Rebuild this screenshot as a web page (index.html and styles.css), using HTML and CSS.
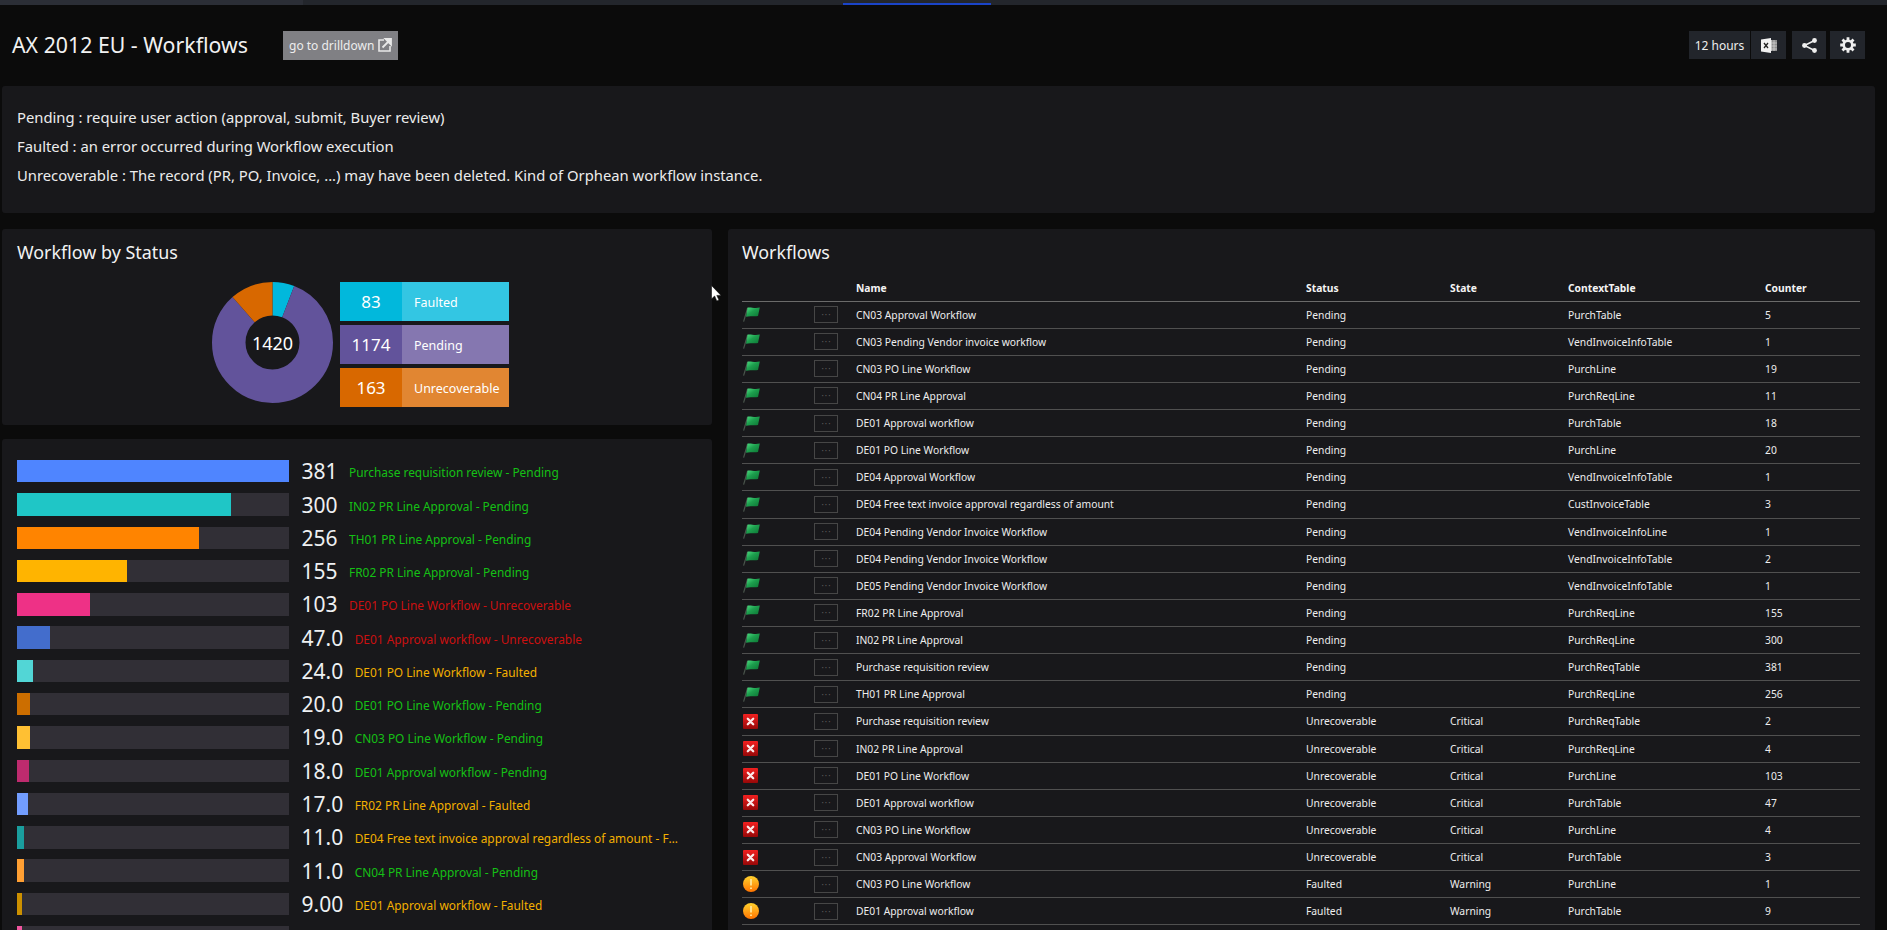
FILE: index.html
```html
<!DOCTYPE html>
<html lang="en">
<head>
  <meta charset="UTF-8" />
  <title>AX 2012 EU - Workflows</title>
  <link rel="stylesheet" href="styles.css">
</head>
<body>
  <svg class="defs" width="0" height="0">
    <defs>
      <linearGradient id="flagGrad" x1="0" y1="0" x2="1" y2="1">
        <stop offset="0" stop-color="#4fe083" />
        <stop offset="0.45" stop-color="#1d9f4e" />
        <stop offset="1" stop-color="#0c7433" />
      </linearGradient>
      <linearGradient id="errGrad" x1="0" y1="0" x2="0" y2="1">
        <stop offset="0" stop-color="#f22020" />
        <stop offset="1" stop-color="#960808" />
      </linearGradient>
      <linearGradient id="warnGrad" x1="0" y1="0" x2="0" y2="1">
        <stop offset="0" stop-color="#ffd22e" />
        <stop offset="1" stop-color="#ff7300" />
      </linearGradient>
      <symbol id="flag" viewBox="0 0 17 15">
        <path d="M0.6 14.6 L4.6 1" stroke="#4a554c" stroke-width="1.2" fill="none" />
        <path d="M4.6 0.6 C8 0 11 1.6 16.8 0.6 L15 9 C10.5 9.8 7 8.4 3 9.8 Z" fill="url(#flagGrad)" />
      </symbol>
      <symbol id="err" viewBox="0 0 15 15">
        <rect width="15" height="15" rx="1" fill="url(#errGrad)" />
        <path d="M4.8 4.8 L10.2 10.2 M10.2 4.8 L4.8 10.2" stroke="#fbeaea" stroke-width="2.3" stroke-linecap="round" />
      </symbol>
      <symbol id="warn" viewBox="0 0 16 16">
        <circle cx="8" cy="8" r="8" fill="url(#warnGrad)" />
        <path d="M8 3 V9.5 M8 11.5 V13" stroke="#ffdf8c" stroke-width="2" />
      </symbol>
    </defs>
  </svg>

  <div class="page">
    <div class="topstrip">
      <div class="topstrip-left"></div>
      <div class="topstrip-tab"></div>
    </div>

    <header class="header">
      <h1 class="page-title">AX 2012 EU - Workflows</h1>
      <a class="drill-btn" href="#">go to drilldown
        <svg width="14" height="14" viewBox="0 0 14 14">
          <path d="M6 2 H1 V13 H12 V8" fill="none" stroke="#e8e8e8" stroke-width="1.6" />
          <path d="M4.5 9.5 L10 4 M7.5 1 H13 V6.5 Z" fill="#e8e8e8" stroke="#e8e8e8" stroke-width="1.8" />
        </svg>
      </a>
      <div class="header-tools">
        <span class="tool tool-range">12 hours</span>
        <span class="tool tool-xls">
          <svg width="16" height="15" viewBox="0 0 16 15">
            <rect x="8" y="2" width="8" height="11" fill="#8d8d8d" />
            <path d="M10.5 2 V13 M13 2 V13 M8 5 H16 M8 8 H16 M8 11 H16" stroke="#d8d8d8" stroke-width="0.7" />
            <path d="M0 1.5 L10 0 V15 L0 13.5 Z" fill="#f2f2f2" />
            <path d="M3 5 L7 10 M7 5 L3 10" stroke="#222" stroke-width="1.3" />
          </svg>
        </span>
        <span class="tool tool-share">
          <svg width="15" height="15" viewBox="0 0 15 15">
            <path d="M12.5 2.5 L2.5 7.5 L12.5 12.5" fill="none" stroke="#efefef" stroke-width="1.5" />
            <circle cx="12.5" cy="2.5" r="2.4" fill="#efefef" />
            <circle cx="2.5" cy="7.5" r="2.4" fill="#efefef" />
            <circle cx="12.5" cy="12.5" r="2.4" fill="#efefef" />
          </svg>
        </span>
        <span class="tool tool-gear">
          <svg width="16" height="16" viewBox="0 0 16 16">
            <circle cx="8" cy="8" r="4.3" fill="none" stroke="#efefef" stroke-width="2.6" />
            <path d="M8 0.2 V3 M8 13 V15.8 M0.2 8 H3 M13 8 H15.8 M2.5 2.5 L4.4 4.4 M11.6 11.6 L13.5 13.5 M13.5 2.5 L11.6 4.4 M4.4 11.6 L2.5 13.5" stroke="#efefef" stroke-width="2.8" />
          </svg>
        </span>
      </div>
    </header>

    <section class="panel info-panel">
      <p>Pending : require user action (approval, submit, Buyer review)</p>
      <p>Faulted : an error occurred during Workflow execution</p>
      <p>Unrecoverable : The record (PR, PO, Invoice, ...) may have been deleted. Kind of Orphean workflow instance.</p>
    </section>

    <div class="columns">
      <div class="left-col">
        <section class="panel status-panel">
          <h2 class="panel-title">Workflow by Status</h2>
          <div class="status-chart">
            <svg class="donut" width="121" height="121" viewBox="0 0 121 121">
              <g transform="rotate(-90 60.5 60.5)" fill="none" stroke-width="33.5">
                <circle cx="60.5" cy="60.5" r="43.75" pathLength="1420" stroke="#01b8dc" stroke-dasharray="83 1337" />
                <circle cx="60.5" cy="60.5" r="43.75" pathLength="1420" stroke="#62539b" stroke-dasharray="1174 246" stroke-dashoffset="-83" />
                <circle cx="60.5" cy="60.5" r="43.75" pathLength="1420" stroke="#d86800" stroke-dasharray="163 1257" stroke-dashoffset="-1257" />
              </g>
              <text class="donut-total" x="60.5" y="60.5" text-anchor="middle" dominant-baseline="central">1420</text>
            </svg>
            <div class="tiles">
              <div class="tile tile-faulted"><span class="tile-num">83</span><span class="tile-label">Faulted</span></div>
              <div class="tile tile-pending"><span class="tile-num">1174</span><span class="tile-label">Pending</span></div>
              <div class="tile tile-unrec"><span class="tile-num">163</span><span class="tile-label">Unrecoverable</span></div>
            </div>
          </div>
        </section>

        <section class="panel bars-panel">
          <div class="bar-row"><div class="track"><div class="fill" style="width:100%;background:#4f85ff"></div></div><span class="bar-value">381</span><span class="bar-label ok">Purchase requisition review - Pending</span></div>
          <div class="bar-row"><div class="track"><div class="fill" style="width:78.7%;background:#1fc6c6"></div></div><span class="bar-value">300</span><span class="bar-label ok">IN02 PR Line Approval - Pending</span></div>
          <div class="bar-row"><div class="track"><div class="fill" style="width:66.9%;background:#ff8400"></div></div><span class="bar-value">256</span><span class="bar-label ok">TH01 PR Line Approval - Pending</span></div>
          <div class="bar-row"><div class="track"><div class="fill" style="width:40.4%;background:#ffb400"></div></div><span class="bar-value">155</span><span class="bar-label ok">FR02 PR Line Approval - Pending</span></div>
          <div class="bar-row"><div class="track"><div class="fill" style="width:27%;background:#ee3186"></div></div><span class="bar-value">103</span><span class="bar-label bad">DE01 PO Line Workflow - Unrecoverable</span></div>
          <div class="bar-row"><div class="track"><div class="fill" style="width:12.3%;background:#436dcc"></div></div><span class="bar-value">47.0</span><span class="bar-label bad">DE01 Approval workflow - Unrecoverable</span></div>
          <div class="bar-row"><div class="track"><div class="fill" style="width:6%;background:#52d6d6"></div></div><span class="bar-value">24.0</span><span class="bar-label warn">DE01 PO Line Workflow - Faulted</span></div>
          <div class="bar-row"><div class="track"><div class="fill" style="width:4.8%;background:#cc6e00"></div></div><span class="bar-value">20.0</span><span class="bar-label ok">DE01 PO Line Workflow - Pending</span></div>
          <div class="bar-row"><div class="track"><div class="fill" style="width:4.8%;background:#ffc033"></div></div><span class="bar-value">19.0</span><span class="bar-label ok">CN03 PO Line Workflow - Pending</span></div>
          <div class="bar-row"><div class="track"><div class="fill" style="width:4.4%;background:#be2b6e"></div></div><span class="bar-value">18.0</span><span class="bar-label ok">DE01 Approval workflow - Pending</span></div>
          <div class="bar-row"><div class="track"><div class="fill" style="width:4.1%;background:#729dff"></div></div><span class="bar-value">17.0</span><span class="bar-label warn">FR02 PR Line Approval - Faulted</span></div>
          <div class="bar-row"><div class="track"><div class="fill" style="width:2.6%;background:#1a9e9e"></div></div><span class="bar-value">11.0</span><span class="bar-label warn">DE04 Free text invoice approval regardless of amount - Faulted</span></div>
          <div class="bar-row"><div class="track"><div class="fill" style="width:2.6%;background:#ff9f33"></div></div><span class="bar-value">11.0</span><span class="bar-label ok">CN04 PR Line Approval - Pending</span></div>
          <div class="bar-row"><div class="track"><div class="fill" style="width:1.9%;background:#cc9000"></div></div><span class="bar-value">9.00</span><span class="bar-label warn">DE01 Approval workflow - Faulted</span></div>
          <div class="bar-row"><div class="track"><div class="fill" style="width:1.9%;background:#f0569f"></div></div></div>
        </section>
      </div>

      <section class="panel table-panel">
        <h2 class="panel-title">Workflows</h2>
        <table class="wf-table">
          <colgroup>
            <col class="c-icon"><col class="c-more"><col class="c-name"><col class="c-status"><col class="c-state"><col class="c-context"><col class="c-counter">
          </colgroup>
          <thead>
            <tr><th></th><th></th><th>Name</th><th>Status</th><th>State</th><th>ContextTable</th><th>Counter</th></tr>
          </thead>
          <tbody>
            <tr><td><svg class="ico-flag"><use href="#flag" /></svg></td><td><button class="more">···</button></td><td>CN03 Approval Workflow</td><td>Pending</td><td></td><td>PurchTable</td><td>5</td></tr>
            <tr><td><svg class="ico-flag"><use href="#flag" /></svg></td><td><button class="more">···</button></td><td>CN03 Pending Vendor invoice workflow</td><td>Pending</td><td></td><td>VendInvoiceInfoTable</td><td>1</td></tr>
            <tr><td><svg class="ico-flag"><use href="#flag" /></svg></td><td><button class="more">···</button></td><td>CN03 PO Line Workflow</td><td>Pending</td><td></td><td>PurchLine</td><td>19</td></tr>
            <tr><td><svg class="ico-flag"><use href="#flag" /></svg></td><td><button class="more">···</button></td><td>CN04 PR Line Approval</td><td>Pending</td><td></td><td>PurchReqLine</td><td>11</td></tr>
            <tr><td><svg class="ico-flag"><use href="#flag" /></svg></td><td><button class="more">···</button></td><td>DE01 Approval workflow</td><td>Pending</td><td></td><td>PurchTable</td><td>18</td></tr>
            <tr><td><svg class="ico-flag"><use href="#flag" /></svg></td><td><button class="more">···</button></td><td>DE01 PO Line Workflow</td><td>Pending</td><td></td><td>PurchLine</td><td>20</td></tr>
            <tr><td><svg class="ico-flag"><use href="#flag" /></svg></td><td><button class="more">···</button></td><td>DE04 Approval Workflow</td><td>Pending</td><td></td><td>VendInvoiceInfoTable</td><td>1</td></tr>
            <tr><td><svg class="ico-flag"><use href="#flag" /></svg></td><td><button class="more">···</button></td><td>DE04 Free text invoice approval regardless of amount</td><td>Pending</td><td></td><td>CustInvoiceTable</td><td>3</td></tr>
            <tr><td><svg class="ico-flag"><use href="#flag" /></svg></td><td><button class="more">···</button></td><td>DE04 Pending Vendor Invoice Workflow</td><td>Pending</td><td></td><td>VendInvoiceInfoLine</td><td>1</td></tr>
            <tr><td><svg class="ico-flag"><use href="#flag" /></svg></td><td><button class="more">···</button></td><td>DE04 Pending Vendor Invoice Workflow</td><td>Pending</td><td></td><td>VendInvoiceInfoTable</td><td>2</td></tr>
            <tr><td><svg class="ico-flag"><use href="#flag" /></svg></td><td><button class="more">···</button></td><td>DE05 Pending Vendor Invoice Workflow</td><td>Pending</td><td></td><td>VendInvoiceInfoTable</td><td>1</td></tr>
            <tr><td><svg class="ico-flag"><use href="#flag" /></svg></td><td><button class="more">···</button></td><td>FR02 PR Line Approval</td><td>Pending</td><td></td><td>PurchReqLine</td><td>155</td></tr>
            <tr><td><svg class="ico-flag"><use href="#flag" /></svg></td><td><button class="more">···</button></td><td>IN02 PR Line Approval</td><td>Pending</td><td></td><td>PurchReqLine</td><td>300</td></tr>
            <tr><td><svg class="ico-flag"><use href="#flag" /></svg></td><td><button class="more">···</button></td><td>Purchase requisition review</td><td>Pending</td><td></td><td>PurchReqTable</td><td>381</td></tr>
            <tr><td><svg class="ico-flag"><use href="#flag" /></svg></td><td><button class="more">···</button></td><td>TH01 PR Line Approval</td><td>Pending</td><td></td><td>PurchReqLine</td><td>256</td></tr>
            <tr><td><svg class="ico-err"><use href="#err" /></svg></td><td><button class="more">···</button></td><td>Purchase requisition review</td><td>Unrecoverable</td><td>Critical</td><td>PurchReqTable</td><td>2</td></tr>
            <tr><td><svg class="ico-err"><use href="#err" /></svg></td><td><button class="more">···</button></td><td>IN02 PR Line Approval</td><td>Unrecoverable</td><td>Critical</td><td>PurchReqLine</td><td>4</td></tr>
            <tr><td><svg class="ico-err"><use href="#err" /></svg></td><td><button class="more">···</button></td><td>DE01 PO Line Workflow</td><td>Unrecoverable</td><td>Critical</td><td>PurchLine</td><td>103</td></tr>
            <tr><td><svg class="ico-err"><use href="#err" /></svg></td><td><button class="more">···</button></td><td>DE01 Approval workflow</td><td>Unrecoverable</td><td>Critical</td><td>PurchTable</td><td>47</td></tr>
            <tr><td><svg class="ico-err"><use href="#err" /></svg></td><td><button class="more">···</button></td><td>CN03 PO Line Workflow</td><td>Unrecoverable</td><td>Critical</td><td>PurchLine</td><td>4</td></tr>
            <tr><td><svg class="ico-err"><use href="#err" /></svg></td><td><button class="more">···</button></td><td>CN03 Approval Workflow</td><td>Unrecoverable</td><td>Critical</td><td>PurchTable</td><td>3</td></tr>
            <tr><td><svg class="ico-warn"><use href="#warn" /></svg></td><td><button class="more">···</button></td><td>CN03 PO Line Workflow</td><td>Faulted</td><td>Warning</td><td>PurchLine</td><td>1</td></tr>
            <tr><td><svg class="ico-warn"><use href="#warn" /></svg></td><td><button class="more">···</button></td><td>DE01 Approval workflow</td><td>Faulted</td><td>Warning</td><td>PurchTable</td><td>9</td></tr>
            <tr><td><svg class="ico-warn"><use href="#warn" /></svg></td><td><button class="more">···</button></td><td></td><td></td><td></td><td></td><td></td></tr>
          </tbody>
        </table>
      </section>
    </div>

    <svg class="cursor" width="11" height="17" viewBox="0 0 11 17">
      <path d="M0.5 0.5 V14 L3.6 11 L5.8 16 L8 15 L5.8 10.4 H10 Z" fill="#fff" stroke="#111" stroke-width="0.6" />
    </svg>
  </div>
</body>
</html>
```

FILE: styles.css
```css
body {
  font-family: 'Noto Sans', sans-serif;
  background-color: #0b0b0b;
  color: #ececec;
  margin: 0;
  padding: 0;
  overflow: hidden;
}

.defs {
  position: absolute;
}

.page {
  position: relative;
  height: 930px;
  overflow: hidden;
}

.topstrip {
  display: flex;
  align-items: flex-end;
  height: 5px;
  background-color: #23262c;
}

.topstrip-left {
  width: 303px;
  height: 5px;
  background-color: #2b2e36;
}

.topstrip-tab {
  width: 148px;
  height: 2px;
  margin-left: 540px;
  background-color: #1a44c8;
}

.header {
  display: flex;
  align-items: center;
  box-sizing: border-box;
  height: 81px;
  padding: 0 22px 1px 12px;
}

.page-title {
  margin: 0;
  width: 236px;
  padding-bottom: 1px;
  font-size: 21.3px;
  font-weight: 400;
  white-space: nowrap;
  color: #f2f2f2;
}

.drill-btn {
  display: flex;
  align-items: center;
  justify-content: space-between;
  box-sizing: border-box;
  width: 115px;
  height: 29px;
  margin-left: 35px;
  padding: 0 6px;
  background-color: #808084;
  color: #ededed;
  font-size: 12px;
  white-space: nowrap;
  text-decoration: none;
}

.header-tools {
  display: flex;
  margin-left: auto;
}

.tool {
  display: flex;
  align-items: center;
  justify-content: center;
  height: 28px;
  background-color: #22252b;
  color: #ededed;
  font-size: 12px;
}

.tool-range {
  width: 61px;
}

.tool-xls {
  width: 35px;
  margin-left: 1px;
}

.tool-share {
  width: 34px;
  margin-left: 6px;
}

.tool-gear {
  width: 35px;
  margin-left: 4px;
}

.panel {
  background-color: #18181b;
  border-radius: 3px;
}

.info-panel {
  height: 127px;
  box-sizing: border-box;
  margin: 0 12px 0 2px;
  padding: 16.5px 15px;
  font-size: 14.8px;
}

.info-panel p {
  margin: 0;
  line-height: 29px;
}

.columns {
  display: flex;
  gap: 16px;
  margin: 16px 12px 0 2px;
}

.left-col {
  display: flex;
  flex-direction: column;
  gap: 14px;
  width: 710px;
}

.panel-title {
  margin: 0;
  height: 46px;
  line-height: 46px;
  font-size: 17.9px;
  font-weight: 400;
  color: #f2f2f2;
}

.status-panel {
  height: 196px;
  box-sizing: border-box;
  padding: 0 15px;
}

.status-chart {
  display: flex;
  gap: 7px;
  margin: 7px 0 0 195px;
}

.donut-total {
  fill: #fff;
  font-size: 18px;
}

.tiles {
  display: flex;
  flex-direction: column;
  gap: 4px;
}

.tile {
  display: flex;
  width: 169px;
  height: 39px;
  line-height: 39px;
  color: #fff;
}

.tile-num {
  width: 62px;
  text-align: center;
  font-size: 17px;
}

.tile-label {
  box-sizing: border-box;
  padding: 1px 0 0 12px;
  flex: 1;
  font-size: 12.5px;
}

.tile-faulted .tile-num { background-color: #01b8dc; }
.tile-faulted .tile-label { background-color: #33c6e3; }
.tile-pending .tile-num { background-color: #62539b; }
.tile-pending .tile-label { background-color: #8577b0; }
.tile-unrec .tile-num { background-color: #d86800; }
.tile-unrec .tile-label { background-color: #e18632; }

.bars-panel {
  padding: 15.6px 15px 20px;
}

.bar-row {
  display: flex;
  align-items: center;
  height: 33.29px;
}

.track {
  flex: none;
  width: 272px;
  height: 22.5px;
  background-color: #312f36;
}

.fill {
  height: 100%;
}

.bar-value {
  flex: none;
  margin-left: 12.5px;
  font-size: 21px;
  color: #eef0f2;
}

.bar-label {
  margin-left: 11.5px;
  max-width: 326px;
  padding-top: 2px;
  white-space: nowrap;
  overflow: hidden;
  text-overflow: ellipsis;
  font-size: 11.9px;
}

.bar-label.ok { color: #15c015; }
.bar-label.bad { color: #cc1010; }
.bar-label.warn { color: #f4b000; }

.table-panel {
  flex: 1;
  padding: 0 15px 20px 14px;
}

.wf-table {
  width: 100%;
  table-layout: fixed;
  border-collapse: collapse;
  font-size: 10.3px;
}

.c-icon { width: 72px; }
.c-more { width: 42px; }
.c-name { width: 450px; }
.c-status { width: 144px; }
.c-state { width: 118px; }
.c-context { width: 197px; }

.wf-table th {
  height: 25.5px;
  padding: 0;
  text-align: left;
  font-weight: 700;
  color: #f4f4f4;
  border-bottom: 1px solid #6a6a6a;
}

.wf-table td {
  height: 26.14px;
  padding: 0;
  color: #eeeeee;
  border-bottom: 1px solid #505050;
}

.wf-table svg {
  display: block;
  margin-left: 1px;
}

.ico-flag {
  width: 17px;
  height: 15px;
}

.ico-err {
  width: 15px;
  height: 15px;
}

.ico-warn {
  width: 16px;
  height: 16px;
}

.more {
  display: block;
  width: 24px;
  height: 17px;
  padding: 0;
  background: transparent;
  border: 1px solid #464646;
  color: #5c5c5c;
  font-size: 10px;
  line-height: 13px;
}

.cursor {
  position: absolute;
  left: 711px;
  top: 285px;
}
```
